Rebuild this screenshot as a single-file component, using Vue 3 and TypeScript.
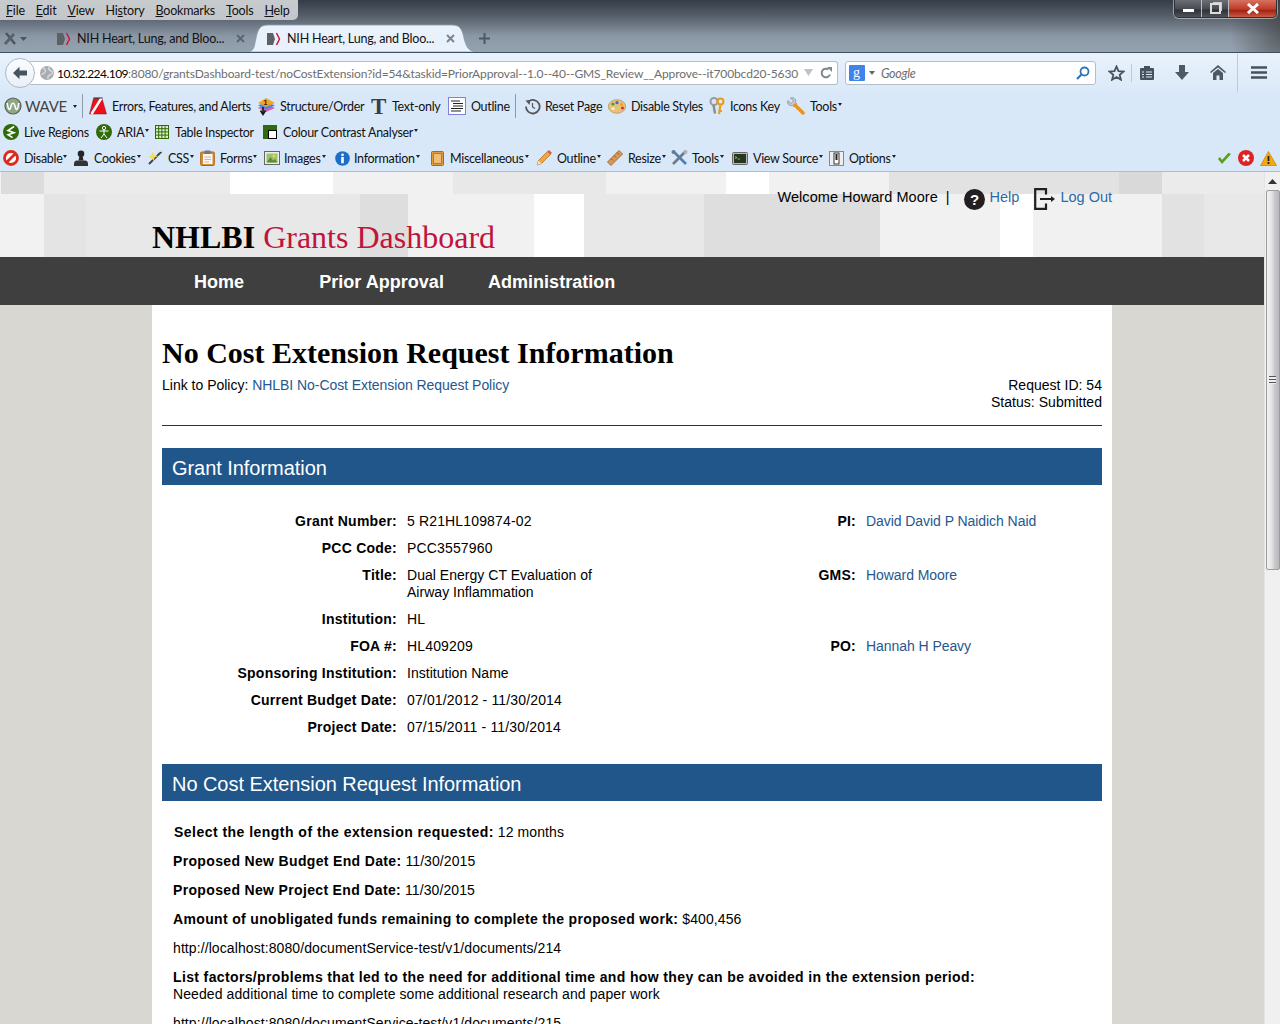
<script setup lang="ts">
interface Item { x: number; tx: number; next: number; text: string; caret?: boolean; big?: boolean; icon: string; sep?: boolean }
const svg = (w: number, h: number, body: string) => `<svg xmlns="http://www.w3.org/2000/svg" width="${w}" height="${h}" viewBox="0 0 ${w} ${h}">${body}</svg>`

const ic: Record<string, string> = {
  wave: svg(18, 18, '<circle cx="9" cy="9" r="8" fill="#8fa786" stroke="#5a5f58" stroke-width="1.2"/><path d="M3.2 6c1.3 8 2.6 8 3.8 3.2C8 5.300 10 5.300 11 9.200 12.200 14 13.500 14 14.800 6" fill="none" stroke="#fff" stroke-width="1.500"/>'),
  errors: svg(18, 18, '<path d="M.5 17 4.500 1.500H13L17.500 17Z" fill="#ee0f1b" stroke="#7a1016" stroke-width=".5"/><path d="M2.500 17 12.500 1" stroke="#fff" stroke-width="2.500"/><path d="M4.500 1H13.500" stroke="#222" stroke-width="1"/>'),
  structure: svg(19, 19, '<path d="M1 11 9 7l9 4-9 4Z" fill="#d85fb4"/><path d="M1 8.500 9 4.500l9 4-9 4Z" fill="#4a86df"/><path d="M1 6 9 1l9 5-9 4Z" fill="#f3a41f"/><path d="M6 10v6M3.500 13.500 6 17.500l2.500-4" fill="none" stroke="#1a1a1a" stroke-width="1.600"/><text x="6.500" y="8" font-family="Liberation Sans" font-size="7" font-weight="700" fill="#222">1</text>'),
  t: svg(16, 18, '<text x="0" y="17" font-family="Liberation Serif" font-size="23" font-weight="700" fill="#3d3d3d">T</text>'),
  outline: svg(18, 18, '<rect x=".5" y=".5" width="17" height="17" fill="#fff" stroke="#7f7fe0"/><path d="M3 4H12M5 6.500H15M5 9H15M3 11.500H15M3 14H13" stroke="#222" stroke-width="1"/>'),
  reset: svg(17, 17, '<path d="M4.500 3.400A6.800 6.800 0 1 1 2 8.500" fill="none" stroke="#555" stroke-width="1.800"/><path d="M1.500 2.500 6.500 2 5.500 7Z" fill="#555"/><path d="M8.500 5v4l2.500 1.500" fill="none" stroke="#555" stroke-width="1.200"/>'),
  palette: svg(18, 15, '<ellipse cx="9" cy="7.500" rx="8.700" ry="6.800" fill="#e6c27a" stroke="#b18e4d" stroke-width=".7"/><circle cx="5" cy="5" r="1.600" fill="#4d9a3f"/><circle cx="9" cy="3.700" r="1.600" fill="#3e6bd6"/><circle cx="13.500" cy="5.500" r="1.500" fill="#e8a02a"/><circle cx="14.500" cy="9" r="1.500" fill="#d92b3a"/><circle cx="5" cy="9.500" r="1.500" fill="#fff3c8"/>'),
  key: svg(17, 19, '<circle cx="5" cy="4.500" r="3.500" fill="none" stroke="#9a9a9a" stroke-width="2"/><path d="M4.500 8 6 16.500" stroke="#8d8d8d" stroke-width="2.400"/><circle cx="11.500" cy="4.500" r="3" fill="none" stroke="#e39c1f" stroke-width="2"/><path d="M11.500 7.500 10 17M10 14H13" stroke="#e89f22" stroke-width="2.200"/>'),
  wrench: svg(18, 18, '<path d="M1 3.500 4 6.500 6.500 4 3.500 1C6.500 -.2 9.500 2 8.500 5.500L10 7 7 10 5.500 8.500C2.500 9.500 -.5 6.500 1 3.500Z" fill="#c6cbd0" stroke="#7c8288" stroke-width=".7"/><path d="M8 8 16 16" stroke="#e8951d" stroke-width="3.500" stroke-linecap="round"/>'),
  live: svg(16, 16, '<circle cx="8" cy="8" r="8" fill="#2f6b0a"/><path d="M11 2.500 5 6.500l6 2.200-6 2 4.500 3" fill="none" stroke="#fff" stroke-width="1.600"/>'),
  aria: svg(16, 16, '<circle cx="8" cy="8" r="8" fill="#2f6b0a"/><circle cx="8" cy="4" r="1.700" fill="none" stroke="#fff"/><path d="M3.500 7H12.500M8 6V10M8 10 5 14M8 10l3 4" fill="none" stroke="#fff" stroke-width="1"/>'),
  table: svg(14, 14, '<rect x=".5" y=".5" width="13" height="13" fill="#dff0c8" stroke="#2f6b0a"/><path d="M3.700 0V14M6.900 0V14M10.100 0V14M0 3.700H14M0 6.900H14M0 10.100H14" stroke="#2f6b0a"/>'),
  colour: svg(14, 14, '<rect width="14" height="14" fill="#2f6b0a"/><rect x="5.500" y="5.500" width="8" height="8" fill="#fff" stroke="#000"/>'),
  disable: svg(16, 16, '<circle cx="8" cy="8" r="6.500" fill="#fff" stroke="#dd2a1b" stroke-width="2.800"/><path d="M3.500 12.500 12.500 3.500" stroke="#dd2a1b" stroke-width="2.800"/>'),
  cookies: svg(16, 16, '<circle cx="8" cy="3.800" r="3.300" fill="#262626"/><path d="M6.500 6h3L10.500 10.500H5.500Z" fill="#262626"/><path d="M1 16V13.500C1 11 3 10.500 5 10.500H11C13 10.500 15 11 15 13.500V16Z" fill="#333"/>'),
  css: svg(16, 16, '<path d="M2 14 14.500 1.500" stroke="#444" stroke-width="2"/><path d="M10 2.500 15 1" stroke="#ddd" stroke-width="1"/><path d="M6 1.500 7.300 5 11 6 7.500 7.500 6.500 11 4.700 8 1 7.500 4.300 5.300Z" fill="#f5dd52"/>'),
  forms: svg(15, 16, '<rect x=".7" y="2" width="13.600" height="13.500" rx="1" fill="#d98d38" stroke="#a9651f"/><rect x="3" y="4" width="9.500" height="10" fill="#fbf7ee"/><rect x="4.500" y=".5" width="6" height="3.500" fill="#777"/><path d="M4.500 7H11M4.500 9.500H11M4.500 12H9" stroke="#bbb"/>'),
  images: svg(16, 14, '<rect x=".5" y=".5" width="15" height="13" fill="#eee" stroke="#666"/><rect x="2.500" y="2.500" width="11" height="9" fill="#9cc36a"/><circle cx="10" cy="5" r="1.500" fill="#f0d35a"/><path d="M2.500 11.500 6.500 6 9 9.500 11 8 13.500 11.500Z" fill="#5f8a3c"/>'),
  info: svg(15, 15, '<circle cx="7.500" cy="7.500" r="7.300" fill="#1d6ec9"/><circle cx="7.500" cy="3.800" r="1.400" fill="#fff"/><rect x="6.200" y="6" width="2.600" height="6.300" fill="#fff"/>'),
  misc: svg(13, 15, '<rect x=".5" y=".5" width="12" height="14" rx="1" fill="#e19a3c" stroke="#a8681f"/><rect x="2.500" y="2.500" width="8" height="10" fill="#efbd75" stroke="#b87a2a"/>'),
  pencil: svg(16, 16, '<path d="M1 15 2.500 10.500 11.500 1.500 14.500 4.500 5.500 13.500Z" fill="#f0a63a" stroke="#a8691e" stroke-width=".7"/><path d="M11.500 1.500 13 0 16 3 14.500 4.500Z" fill="#de5656"/><path d="M1 15 2.500 10.500 5.500 13.500Z" fill="#f3dfb8"/>'),
  ruler: svg(16, 16, '<path d="M.5 12 12 .5 15.500 4 4 15.500Z" fill="#d9975a" stroke="#a66c33"/><path d="M4 8.500 6 10.500M7 5.500 9 7.500M10 2.500 12 4.500" stroke="#8a5a2a"/>'),
  tools: svg(17, 16, '<path d="M2 1 15 14" stroke="#4a7fc0" stroke-width="2.600"/><path d="M15 1 2 14" stroke="#707a84" stroke-width="2.600"/><circle cx="14.500" cy="2" r="2" fill="#aab3bb"/><circle cx="2.500" cy="2" r="2" fill="#707a84"/>'),
  source: svg(16, 13, '<rect x=".5" y=".5" width="15" height="12" rx="1" fill="#b9b9b9" stroke="#666"/><rect x="2" y="2" width="12" height="9" fill="#27361f"/><path d="M3 4.500 5 5.500 3 6.500M5.500 7H8" stroke="#9fd08a" fill="none" stroke-width=".8"/>'),
  options: svg(15, 15, '<rect x=".5" y=".5" width="14" height="14" fill="#eee" stroke="#888"/><rect x="5" y="2" width="5" height="11" fill="#fff" stroke="#333"/><rect x="6.500" y="3" width="2" height="6" fill="#222"/>')
}

const t = (x: number, tx: number, next: number, text: string, icon: string, caret = false): Item => ({ x, tx, next, text, icon, caret })

const row1: Item[] = [
  { x: 4, tx: 25, next: 82, text: 'WAVE', icon: ic.wave, caret: true, big: true },
  { x: 82, tx: 82, next: 89, text: '', icon: '', sep: true },
  t(89, 112, 257, 'Errors, Features, and Alerts', ic.errors),
  t(257, 280, 371, 'Structure/Order', ic.structure),
  t(371, 392, 448, 'Text-only', ic.t),
  t(448, 471, 515, 'Outline', ic.outline),
  { x: 515, tx: 515, next: 524, text: '', icon: '', sep: true },
  t(524, 545, 608, 'Reset Page', ic.reset),
  t(608, 631, 709, 'Disable Styles', ic.palette),
  t(709, 730, 787, 'Icons Key', ic.key),
  t(787, 810, 860, 'Tools', ic.wrench, true)
]
const row2: Item[] = [
  t(3, 24, 96, 'Live Regions', ic.live),
  t(96, 117, 155, 'ARIA', ic.aria, true),
  t(155, 175, 263, 'Table Inspector', ic.table),
  t(263, 283, 440, 'Colour Contrast Analyser', ic.colour, true)
]
const row3: Item[] = [
  t(3, 24, 73, 'Disable', ic.disable, true),
  t(73, 94, 147, 'Cookies', ic.cookies, true),
  t(147, 168, 200, 'CSS', ic.css, true),
  t(200, 220, 264, 'Forms', ic.forms, true),
  t(264, 284, 335, 'Images', ic.images, true),
  t(335, 354, 431, 'Information', ic.info, true),
  t(431, 450, 536, 'Miscellaneous', ic.misc, true),
  t(536, 557, 607, 'Outline', ic.pencil, true),
  t(607, 628, 671, 'Resize', ic.ruler, true),
  t(671, 692, 732, 'Tools', ic.tools, true),
  t(732, 753, 829, 'View Source', ic.source, true),
  t(829, 849, 905, 'Options', ic.options, true)
]
const rows = [row1, row2, row3]

const menu = [
  { key: 'F', rest: 'ile' }, { key: 'E', rest: 'dit' }, { key: 'V', rest: 'iew' },
  { pre: 'Hi', key: 's', rest: 'tory' }, { key: 'B', rest: 'ookmarks' }, { key: 'T', rest: 'ools' }, { key: 'H', rest: 'elp' }
]

const mosaic1: [number, string][] = [[1, '#f2f2f2'], [43, '#dcdcdc'], [186, '#ebebeb'], [103, '#ffffff'], [120, '#f1f1f1'], [153, '#e8e8e8'], [120, '#f1f1f1'], [43, '#ffffff'], [120, '#f1f1f1'], [230, '#e2e2e2'], [43, '#d9d9d9'], [102, '#ebebeb']]
const mosaic2: [number, string][] = [[44, '#f2f2f2'], [42, '#e4e4e4'], [274, '#e8e8e8'], [48, '#dedede'], [126, '#f1f1f1'], [50, '#ffffff'], [120, '#e8e8e8'], [176, '#dedede'], [120, '#f1f1f1'], [33, '#ffffff'], [129, '#f1f1f1'], [42, '#e2e2e2'], [60, '#e8e8e8']]

const grantRows = [
  { l: 'Grant Number:', v: '5 R21HL109874-02', l2: 'PI:', v2: 'David David P Naidich Naid' },
  { l: 'PCC Code:', v: 'PCC3557960', l2: '', v2: '' },
  { l: 'Title:', v: 'Dual Energy CT Evaluation of Airway Inflammation', l2: 'GMS:', v2: 'Howard Moore' },
  { l: 'Institution:', v: 'HL', l2: '', v2: '' },
  { l: 'FOA #:', v: 'HL409209', l2: 'PO:', v2: 'Hannah H Peavy' },
  { l: 'Sponsoring Institution:', v: 'Institution Name', l2: '', v2: '' },
  { l: 'Current Budget Date:', v: '07/01/2012 - 11/30/2014', l2: '', v2: '' },
  { l: 'Project Date:', v: '07/15/2011 - 11/30/2014', l2: '', v2: '' }
]
const isNumeric = (v: string) => /\d/.test(v)
</script>

<template>
  <div class="app">
    <header class="chrome">
      <div class="glass">
        <div class="menurow">
          <nav class="menu">
            <span v-for="m in menu" :key="m.rest" class="menu-item">{{ m.pre }}<u>{{ m.key }}</u>{{ m.rest }}</span>
          </nav>
          <div class="winctl">
            <div class="wb wb-min"><span class="min-glyph"></span></div>
            <div class="wb wb-max"><span class="max-glyph"></span></div>
            <div class="wb wb-close">
              <svg width="14" height="11" viewBox="0 0 14 11"><path d="M2 1 12 10M12 1 2 10" stroke="#fff" stroke-width="3"/></svg>
            </div>
          </div>
        </div>
        <div class="tabrow">
          <svg class="tools-ic" width="24" height="16" viewBox="0 0 24 16">
            <path d="M3 2 12 13" stroke="#4d555d" stroke-width="2.400"/>
            <path d="M2 13 11 3" stroke="#59626a" stroke-width="2.800"/>
            <path d="M17 6h7l-3.500 4z" fill="#4b535b"/>
          </svg>
          <div class="tab tab-off">
            <svg class="fav" width="14" height="14" viewBox="0 0 14 14"><path d="M0 1H6L8 7 6 13H0Z" fill="#5c6166"/><path d="M9.500 1 12.500 7 9.500 13" fill="none" stroke="#d2143a" stroke-width="1.500"/></svg>
            <span class="tab-t">NIH Heart, Lung, and Bloo...</span>
            <svg class="tab-x" width="9" height="9" viewBox="0 0 9 9"><path d="M1 1 8 8M8 1 1 8" stroke="#5d666f" stroke-width="2"/></svg>
          </div>
          <div class="tab tab-on">
            <svg class="tab-shape" width="232" height="28" viewBox="0 0 232 28"><path d="M0 28C9 28 8 22 10 14 12 5 14 1 22 1H206C214 1 216 5 218 14 220 22 222 28 232 28Z" fill="#e9f2fc" stroke="#8b98a6" stroke-width=".8"/></svg>
            <svg class="fav" width="14" height="14" viewBox="0 0 14 14"><path d="M0 1H6L8 7 6 13H0Z" fill="#5c6166"/><path d="M9.500 1 12.500 7 9.500 13" fill="none" stroke="#d2143a" stroke-width="1.500"/></svg>
            <span class="tab-t">NIH Heart, Lung, and Bloo...</span>
            <svg class="tab-x" width="9" height="9" viewBox="0 0 9 9"><path d="M1 1 8 8M8 1 1 8" stroke="#7c858e" stroke-width="2"/></svg>
          </div>
          <svg class="plus" width="13" height="13" viewBox="0 0 13 13"><path d="M6.500 1V12M1 6.500H12" stroke="#4d5963" stroke-width="2"/></svg>
        </div>
      </div>

      <div class="navbar">
        <div class="back">
          <svg width="16" height="14" viewBox="0 0 16 14"><path d="M1 7 7.500 .8V4.500H15V9.500H7.500V13.200Z" fill="#47535f"/></svg>
        </div>
        <div class="urlbar">
          <svg class="globe" width="14" height="14" viewBox="0 0 14 14"><circle cx="7" cy="7" r="7" fill="#a9adb1"/><path d="M3 2C5 3 6 4 5 6S2 7 2 9M9 1C8 3 9 4 11 5S13 8 10 9 8 11 8 13" fill="none" stroke="#d5d8da" stroke-width="1.500"/></svg>
          <span class="url"><span class="host">10.32.224.109</span>:8080/grantsDashboard-test/noCostExtension?id=54&amp;taskid=PriorApproval--1.0--40--GMS_Review__Approve--it700bcd20-5630</span>
          <svg class="urldrop" width="9" height="7" viewBox="0 0 9 7"><path d="M0 0H9L4.500 7Z" fill="#bcc3ca"/></svg>
          <svg class="reload" width="12" height="12" viewBox="0 0 12 12"><path d="M10 7.500A4.300 4.300 0 1 1 8.500 2.500" fill="none" stroke="#7c8790" stroke-width="2"/><path d="M7 0H12V5Z" fill="#7c8790"/></svg>
        </div>
        <div class="search">
          <svg class="gicon" width="16" height="16" viewBox="0 0 16 16"><rect width="16" height="16" rx="1" fill="#3f83ec"/><text x="4" y="12" font-family="Liberation Serif" font-size="14" fill="#fff">g</text></svg>
          <span class="scaret"></span>
          <span class="gtext">Google</span>
          <svg class="mag" width="14" height="14" viewBox="0 0 14 14"><circle cx="8.500" cy="5.500" r="4" fill="none" stroke="#2f75b5" stroke-width="1.800"/><path d="M5.500 8.500 1 13" stroke="#2f75b5" stroke-width="2.200"/></svg>
        </div>
        <svg class="nb-star" width="17" height="16" viewBox="0 0 17 16"><path d="M8.500 1.500 10.500 6.200 15.500 6.600 11.700 9.800 12.900 14.700 8.500 12.100 4.100 14.700 5.300 9.800 1.500 6.600 6.500 6.200Z" fill="none" stroke="#46535f" stroke-width="1.800"/></svg>
        <span class="nb-sep nb-sep1"></span>
        <svg class="nb-clip" width="14" height="14" viewBox="0 0 14 14"><rect x="0" y="2" width="14" height="12" rx="1" fill="#46535f"/><rect x="4" y="0" width="6" height="3" fill="#46535f"/><path d="M2 6H4M6 6H12M2 8.500H4M6 8.500H12M2 11H4M6 11H12" stroke="#dce8f5"/></svg>
        <svg class="nb-down" width="14" height="15" viewBox="0 0 14 15"><path d="M4 0H10V7H14L7 15 0 7H4Z" fill="#4d5a66"/></svg>
        <svg class="nb-home" width="16" height="15" viewBox="0 0 16 15"><path d="M8 0 0 7 1 8 8 2.500 15 8 16 7Z" fill="#4d5a66"/><path d="M3 8 8 4 13 8V15H9.500V10.500H6.500V15H3Z" fill="#4d5a66"/></svg>
        <span class="nb-sep nb-sep2"></span>
        <svg class="nb-menu" width="16" height="13" viewBox="0 0 16 13"><path d="M0 1.500H16M0 6.500H16M0 11.500H16" stroke="#46535f" stroke-width="2.400"/></svg>
      </div>

      <div class="bars">
        <div v-for="(r, ri) in rows" :key="ri" class="tbrow">
          <div
            v-for="it in r"
            :key="it.x"
            class="tbitem"
            :style="{ width: it.next - it.x + 'px' }"
          >
            <span v-if="it.sep" class="tbsep"></span>
            <template v-else>
              <span class="tbicon" :style="{ width: it.tx - it.x + 'px' }" v-html="it.icon"></span>
              <span class="tbtext" :class="{ big: it.big }">{{ it.text }}</span>
              <span v-if="it.caret" class="caret" :class="{ bigcaret: it.big }"></span>
            </template>
          </div>
          <div v-if="ri === 2" class="status">
            <svg width="15" height="13" viewBox="0 0 15 13"><path d="M1 7 5 12 14 2 11.500 .8 5 8 3 5Z" fill="#5a9e1e"/></svg>
            <svg width="16" height="16" viewBox="0 0 16 16"><circle cx="8" cy="8" r="8" fill="#dc2222"/><path d="M5 5 11 11M11 5 5 11" stroke="#fff" stroke-width="2.500"/></svg>
            <svg width="17" height="15" viewBox="0 0 17 15"><path d="M8.500 .5 16.500 14.500H.5Z" fill="#f5a711" stroke="#c97d06" stroke-width=".7"/><path d="M8.500 5V10M8.500 11V13" stroke="#222" stroke-width="1.800"/></svg>
          </div>
        </div>
      </div>
    </header>

    <div class="view">
      <main class="page">
        <div class="hdr">
          <div class="mosaic">
            <div class="mrow mrow1">
              <span v-for="(b, i) in mosaic1" :key="i" :style="{ width: b[0] + 'px', background: b[1] }"></span>
            </div>
            <div class="mrow mrow2">
              <span v-for="(b, i) in mosaic2" :key="i" :style="{ width: b[0] + 'px', background: b[1] }"></span>
            </div>
          </div>
          <div class="hdr-content">
            <div class="userline">
              <span class="welcome">Welcome Howard Moore</span>
              <span class="pipe">|</span>
              <svg class="help-ic" width="21" height="21" viewBox="0 0 21 21"><circle cx="10.500" cy="10.500" r="10.500" fill="#231f20"/><text x="10.500" y="16" text-anchor="middle" font-family="Liberation Sans" font-size="15" font-weight="700" fill="#fff">?</text></svg>
              <a class="ulink help">Help</a>
              <svg class="out-ic" width="22" height="22" viewBox="0 0 22 22"><path d="M12 6.500V1.200H1.200V20.800H12V15.500" fill="none" stroke="#231f20" stroke-width="2.200"/><path d="M6 11H18" stroke="#231f20" stroke-width="2"/><path d="M17 8 21 11 17 14Z" fill="#231f20"/></svg>
              <a class="ulink logout">Log Out</a>
            </div>
            <div class="brand"><b>NHLBI</b> <span>Grants Dashboard</span></div>
          </div>
        </div>
        <nav class="mainnav">
          <a class="nav-home">Home</a>
          <a class="nav-prior">Prior Approval</a>
          <a>Administration</a>
        </nav>
        <div class="sheet">
          <h1>No Cost Extension Request Information</h1>
          <div class="meta">
            <div>Link to Policy: <a>NHLBI No-Cost Extension Request Policy</a></div>
            <div class="meta-r">Request ID: 54<br />Status: Submitted</div>
          </div>
          <hr />
          <h2>Grant Information</h2>
          <div class="grant">
            <template v-for="r in grantRows" :key="r.l">
              <div class="gl">{{ r.l }}</div>
              <div class="gv" :class="{ num: isNumeric(r.v) }">{{ r.v }}</div>
              <div class="gl">{{ r.l2 }}</div>
              <a>{{ r.v2 }}</a>
            </template>
          </div>
          <h2>No Cost Extension Request Information</h2>
          <div class="req">
            <p class="first"><b>Select the length of the extension requested:</b> 12 months</p>
            <p><b>Proposed New Budget End Date:</b> 11/30/2015</p>
            <p><b>Proposed New Project End Date:</b> 11/30/2015</p>
            <p><b>Amount of unobligated funds remaining to complete the proposed work:</b> $400,456</p>
            <p>http://localhost:8080/documentService-test/v1/documents/214</p>
            <p><b class="long">List factors/problems that led to the need for additional time and how they can be avoided in the extension period:</b><br />Needed additional time to complete some additional research and paper work</p>
            <p>http://localhost:8080/documentService-test/v1/documents/215</p>
          </div>
        </div>
      </main>
      <aside class="scroll">
        <svg class="sc-up" width="9" height="5" viewBox="0 0 9 5"><path d="M0 5 4.500 0 9 5Z" fill="#333"/></svg>
        <div class="thumb"><span class="grip"></span></div>
      </aside>
    </div>
  </div>
</template>

<style>
html, body { margin: 0; overflow: hidden; background: #d8d7d2; }
</style>

<style scoped>
.app { width: 1280px; height: 1024px; overflow: hidden; display: flex; flex-direction: column; font-family: "Liberation Sans", Arial, sans-serif; color: #000; }
.chrome { height: 172px; flex: none; font-family: Lato, "Noto Sans", sans-serif; font-size: 12.500px; letter-spacing: -.3px; color: #111; background: #d9e8f8; }

.glass { height: 53px; box-sizing: border-box; border-bottom: 1px solid #3e4f60; background: radial-gradient(ellipse 60px 70px at 1290px 30px, rgba(60,60,60,.75), rgba(60,60,60,0)), linear-gradient(#353c47 0, #535c67 15px, #8a97a4 36px, #95a2af 52px); }
.menurow { height: 25px; display: flex; align-items: flex-start; }
.menu { width: 298px; height: 20px; box-sizing: border-box; padding-left: 6px; display: flex; gap: 11px; align-items: center; background: linear-gradient(#c8cbce, #c2c6ca); border-radius: 0 0 5px 0; letter-spacing: -.2px; }
.menu-item { color: #111; }
.winctl { margin-left: auto; margin-right: 3px; width: 103px; height: 18px; box-sizing: border-box; display: flex; border: 1px solid #2d3238; border-top: 0; border-radius: 0 0 5px 5px; overflow: hidden; box-shadow: 0 0 0 1px rgba(255,255,255,.45); }
.wb { display: flex; align-items: center; justify-content: center; height: 100%; box-sizing: border-box; }
.wb-min, .wb-max { width: 27px; background: linear-gradient(#6a6f75, #484d53 50%, #2f3338 60%, #4f5359); border-right: 1px solid #b9bdc1; }
.wb-close { flex: 1; background: linear-gradient(#d9705e, #bd3a27 55%, #a3200f 60%, #c95a47); }
.min-glyph { width: 11px; height: 3px; background: #fff; margin-top: 4px; }
.max-glyph { width: 7px; height: 7px; border: 2px solid #ddd; box-shadow: 2px -2px 0 -1px #ccc; }

.tabrow { height: 27px; display: flex; align-items: center; position: relative; }
.tools-ic { margin-left: 3px; flex: none; }
.tab { height: 27px; flex: none; display: flex; align-items: center; position: relative; box-sizing: border-box; }
.tab-off { width: 228px; padding-left: 30px; }
.tab-on { width: 210px; padding-left: 12px; }
.fav { flex: none; position: relative; }
.tab-t { margin-left: 6px; width: 148px; white-space: nowrap; position: relative; color: #111; letter-spacing: -.2px; }
.tab-x { flex: none; margin-left: 11px; position: relative; }
.tab-shape { position: absolute; left: -9px; top: -1px; }
.plus { margin-left: 13px; flex: none; margin-top: -1px; }

.navbar { height: 39px; display: flex; align-items: center; background: linear-gradient(#e9f2fc, #dbe9f8); position: relative; }
.back { width: 28px; height: 28px; border-radius: 50%; margin-left: 5px; z-index: 1; flex: none; display: flex; align-items: center; justify-content: center; background: linear-gradient(#fbfdff, #e9eff6); border: 1px solid #aab8c8; }
.urlbar { margin-left: -5px; width: 808px; height: 24px; flex: none; box-sizing: border-box; display: flex; align-items: center; background: #fff; border: 1px solid #b1bfcd; border-left: 0; border-radius: 0 3px 3px 0; padding-left: 10px; }
.globe { flex: none; }
.url { margin-left: 3px; width: 742px; flex: none; white-space: nowrap; overflow: hidden; color: #6e6e6e; padding-top: 1px; font-size: 12px; letter-spacing: -.12px; }
.host { color: #000; letter-spacing: -.55px; }
.urldrop { flex: none; margin-left: 5px; }
.reload { flex: none; margin-left: 7px; }
.search { margin-left: 7px; width: 251px; height: 24px; flex: none; box-sizing: border-box; display: flex; align-items: center; background: #fff; border: 1px solid #b1bfcd; border-radius: 3px; padding-left: 3px; }
.gicon { flex: none; }
.scaret { width: 0; height: 0; border: 3px solid transparent; border-top: 4px solid #666; border-bottom: 0; margin-left: 4px; }
.gtext { margin-left: 6px; color: #6e6e6e; font-style: italic; flex: 1; padding-top: 1px; }
.mag { flex: none; margin-right: 5px; }
.nb-star { margin-left: 12px; flex: none; }
.nb-sep { width: 1px; background: #bccad9; flex: none; }
.nb-sep1 { height: 18px; margin-left: 6px; }
.nb-clip { margin-left: 8px; flex: none; }
.nb-down { margin-left: 21px; flex: none; }
.nb-home { margin-left: 21px; flex: none; }
.nb-sep2 { height: 38px; margin-left: 11px; }
.nb-menu { margin-left: 13px; flex: none; }

.bars { height: 80px; box-sizing: border-box; padding-top: 1px; border-bottom: 1px solid #aabdd3; background: #d9e8f8; }
.tbrow { height: 26px; display: flex; align-items: center; }
.tbrow:nth-child(1) { padding-left: 4px; }
.tbrow:nth-child(2), .tbrow:nth-child(3) { padding-left: 3px; }
.tbitem { display: flex; align-items: center; height: 100%; flex: none; white-space: nowrap; }
.tbicon { display: flex; align-items: center; flex: none; }
.tbtext { color: #111; }
.big { font-size: 15px; color: #444; margin-right: 5px; }
.caret { width: 0; height: 0; border: 2.500px solid transparent; border-top: 3px solid #222; border-bottom: 0; margin-top: -3px; margin-left: 1px; }
.bigcaret { margin-top: 0; }
.tbsep { width: 1px; height: 24px; background: #8d9aa8; }
.status { margin-left: auto; display: flex; align-items: center; gap: 6px; padding-right: 3px; }

.view { flex: 1; min-height: 0; display: flex; }
.page { width: 1264px; flex: none; overflow: hidden; background: #d8d7d2; }
.hdr { height: 85px; display: grid; }
.mosaic, .hdr-content { grid-area: 1 / 1; }
.mosaic { display: flex; flex-direction: column; }
.mrow { display: flex; }
.mrow span { display: block; flex: none; height: 100%; }
.mrow1 { height: 22px; }
.mrow2 { height: 63px; }
.hdr-content { display: flex; flex-direction: column; justify-content: space-between; padding: 0 152px; min-width: 0; }
.userline { display: flex; justify-content: flex-end; align-items: flex-start; padding-top: 16px; font-size: 14.500px; line-height: 18px; }
.welcome { white-space: nowrap; letter-spacing: .05px; }
.pipe { margin-left: 8px; }
.help-ic { margin-left: 14px; margin-top: 1px; }
.ulink { color: #2a6aa8; margin-left: 5px; }
.help { margin-right: 15px; }
.logout { margin-left: 4px; }
.brand { font-family: "Liberation Serif", serif; font-size: 32px; line-height: 36px; margin-bottom: 2px; white-space: nowrap; }
.brand b { color: #000; }
.brand span { color: #c0143c; }
.mainnav { height: 48px; box-sizing: border-box; padding-top: 2px; background: #3e3f3e; display: flex; align-items: center; padding-left: 194px; font-size: 18px; font-weight: 700; color: #fff; letter-spacing: .03px; }
.nav-home { margin-right: 75px; }
.nav-prior { margin-right: 44px; }

.sheet { margin: 0 152px; background: #fff; padding: 32px 10px 0; font-size: 14px; line-height: 17px; height: 800px; }
.sheet a { color: #26578f; letter-spacing: -.06px; }
h1 { margin: 0; font-family: "Liberation Serif", serif; font-size: 30px; line-height: 32px; font-weight: 700; }
.meta { display: flex; justify-content: space-between; margin-top: 8px; }
.meta-r { text-align: right; letter-spacing: .03px; }
hr { border: 0; height: 1px; background: #333; margin: 14px 0 22px; }
h2 { margin: 0; height: 37px; background: #20568a; color: #fff; font-size: 20px; font-weight: 400; line-height: 40px; padding-left: 10px; letter-spacing: -.05px; }
.grant { display: grid; grid-template-columns: 235px 200px 239px 1fr; column-gap: 10px; row-gap: 10px; padding: 28px 0 28px; }
.gl { text-align: right; font-weight: 700; letter-spacing: .24px; }
.gv { letter-spacing: .03px; }
.gv.num { letter-spacing: .15px; }
.req { padding: 23px 11px 0; letter-spacing: .09px; }
.req p { margin: 0 0 12px; }
.req b { letter-spacing: .34px; }
.req b.long { letter-spacing: .365px; }
.req .first { padding-left: 1px; }
.req .first b { letter-spacing: .47px; }
.scroll { flex: 1; background: #f0f0f0; display: flex; flex-direction: column; align-items: center; border-left: 1px solid #e4e4e4; }
.sc-up { margin-top: 7px; flex: none; }
.thumb { margin-top: 6px; width: 14px; height: 380px; box-sizing: border-box; flex: none; border: 1px solid #9d9d9d; border-radius: 2px; background: linear-gradient(90deg, #f2f2f2, #e4e4e4 40%, #c8c8cc 65%, #b9b9bd); display: flex; align-items: center; justify-content: center; }
.grip { width: 7px; height: 8px; background: repeating-linear-gradient(#555 0 1px, #eee 1px 2px, #eee 2px 3px); }
</style>
